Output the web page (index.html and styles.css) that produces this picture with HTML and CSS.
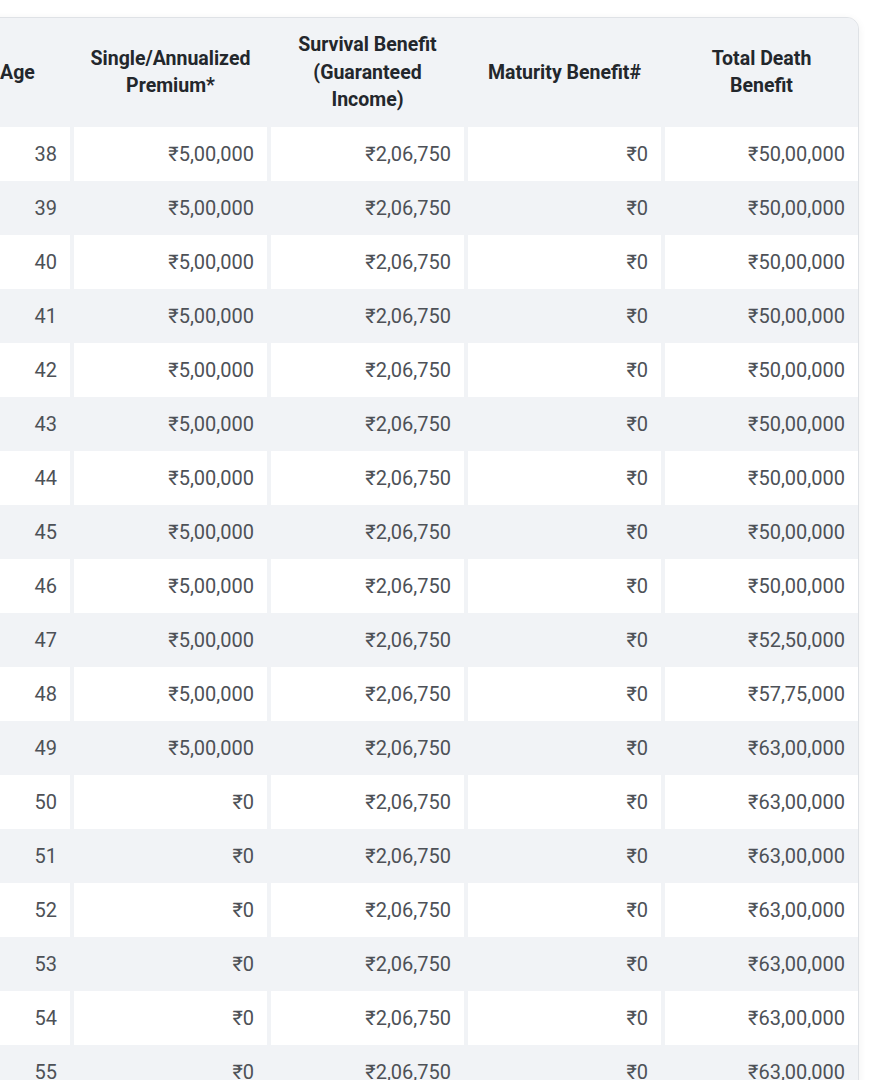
FILE: index.html
```html
<!DOCTYPE html>
<html lang="en">
<head>
<meta charset="utf-8">
<title>Benefit Illustration</title>
<link rel="stylesheet" href="styles.css">
</head>
<body>
<div class="wrap">
  <div class="card">
    <table class="benefits">
      <thead>
        <tr>
          <th class="c-age">Age</th>
          <th class="c-val">Single/Annualized<br>Premium*</th>
          <th class="c-val">Survival Benefit<br>(Guaranteed<br>Income)</th>
          <th class="c-val">Maturity Benefit#</th>
          <th class="c-val">Total Death<br>Benefit</th>
        </tr>
      </thead>
      <tbody>
        <tr><td>38</td><td>₹5,00,000</td><td>₹2,06,750</td><td>₹0</td><td>₹50,00,000</td></tr>
        <tr><td>39</td><td>₹5,00,000</td><td>₹2,06,750</td><td>₹0</td><td>₹50,00,000</td></tr>
        <tr><td>40</td><td>₹5,00,000</td><td>₹2,06,750</td><td>₹0</td><td>₹50,00,000</td></tr>
        <tr><td>41</td><td>₹5,00,000</td><td>₹2,06,750</td><td>₹0</td><td>₹50,00,000</td></tr>
        <tr><td>42</td><td>₹5,00,000</td><td>₹2,06,750</td><td>₹0</td><td>₹50,00,000</td></tr>
        <tr><td>43</td><td>₹5,00,000</td><td>₹2,06,750</td><td>₹0</td><td>₹50,00,000</td></tr>
        <tr><td>44</td><td>₹5,00,000</td><td>₹2,06,750</td><td>₹0</td><td>₹50,00,000</td></tr>
        <tr><td>45</td><td>₹5,00,000</td><td>₹2,06,750</td><td>₹0</td><td>₹50,00,000</td></tr>
        <tr><td>46</td><td>₹5,00,000</td><td>₹2,06,750</td><td>₹0</td><td>₹50,00,000</td></tr>
        <tr><td>47</td><td>₹5,00,000</td><td>₹2,06,750</td><td>₹0</td><td>₹52,50,000</td></tr>
        <tr><td>48</td><td>₹5,00,000</td><td>₹2,06,750</td><td>₹0</td><td>₹57,75,000</td></tr>
        <tr><td>49</td><td>₹5,00,000</td><td>₹2,06,750</td><td>₹0</td><td>₹63,00,000</td></tr>
        <tr><td>50</td><td>₹0</td><td>₹2,06,750</td><td>₹0</td><td>₹63,00,000</td></tr>
        <tr><td>51</td><td>₹0</td><td>₹2,06,750</td><td>₹0</td><td>₹63,00,000</td></tr>
        <tr><td>52</td><td>₹0</td><td>₹2,06,750</td><td>₹0</td><td>₹63,00,000</td></tr>
        <tr><td>53</td><td>₹0</td><td>₹2,06,750</td><td>₹0</td><td>₹63,00,000</td></tr>
        <tr><td>54</td><td>₹0</td><td>₹2,06,750</td><td>₹0</td><td>₹63,00,000</td></tr>
        <tr><td>55</td><td>₹0</td><td>₹2,06,750</td><td>₹0</td><td>₹63,00,000</td></tr>
      </tbody>
    </table>
  </div>
</div>
</body>
</html>
```

FILE: styles.css
```css
html, body {
  margin: 0;
  padding: 0;
  background: #ffffff;
}

body {
  font-family: Roboto, "Noto Sans", "Liberation Sans", sans-serif;
  overflow: hidden;
}

.wrap {
  padding-top: 17px;
  margin-left: -36px;
  width: 895px;
}

.card {
  background: #f1f3f6;
  border: 1px solid #dfe2e6;
  border-radius: 12px;
  overflow: hidden;
  box-shadow: 0 2px 8px rgba(0, 0, 0, 0.06);
}

.benefits {
  width: 100%;
  table-layout: fixed;
  border-collapse: separate;
  border-spacing: 0;
}

.benefits th,
.benefits td {
  box-sizing: border-box;
}

.benefits th + th,
.benefits td + td {
  border-left: 4px solid #f1f3f6;
}

.benefits th {
  height: 108px;
  padding: 13px 4px;
  font-size: 19.5px;
  line-height: 27.5px;
  font-weight: 700;
  color: #23272c;
  text-align: center;
  vertical-align: middle;
  background: #f1f3f6;
}

.benefits .c-age {
  width: 105px;
}

.benefits .c-val {
  width: 197px;
}

.benefits td {
  height: 54px;
  padding: 0 13px 0 8px;
  font-size: 20px;
  line-height: 24px;
  color: #4d5157;
  text-align: right;
  vertical-align: middle;
}

.benefits tbody tr:nth-child(odd) td {
  background: #ffffff;
}

.benefits tbody tr:nth-child(even) td {
  background: #f1f3f6;
}
```
